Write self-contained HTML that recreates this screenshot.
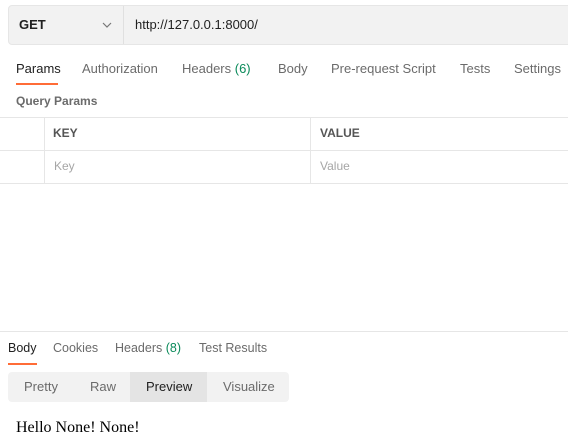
<!DOCTYPE html>
<html><head><style>
*{margin:0;padding:0;box-sizing:border-box}
body{width:568px;height:441px;background:#fff;font-family:"Liberation Sans",sans-serif;position:relative;overflow:hidden;color:#505050}
.a{position:absolute;white-space:nowrap}
.t{font-size:13px;color:#6b6b6b}
</style></head><body>
<div class="a" style="left:8px;top:5px;width:570px;height:40px;background:#f2f2f2;border:1px solid #e6e6e6;border-radius:4px"></div>
<div class="a" style="left:123px;top:6px;width:1px;height:38px;background:#e0e0e0"></div>
<div class="a" style="left:19px;top:17px;font-size:13px;font-weight:bold;color:#212121">GET</div>
<svg class="a" style="left:102px;top:21px" width="10" height="8"><path d="M1 2 L5 6 L9 2" stroke="#777" stroke-width="1.2" fill="none"/></svg>
<div class="a" style="left:135px;top:17px;font-size:13px;color:#212121">http://127.0.0.1:8000/</div>

<div class="a t" style="left:16px;top:61px;color:#212121">Params</div>
<div class="a" style="left:16px;top:83px;width:42px;height:2px;background:#ff6c37"></div>
<div class="a t" style="left:82px;top:61px">Authorization</div>
<div class="a t" style="left:182px;top:61px">Headers <span style="color:#0a8a5a">(6)</span></div>
<div class="a t" style="left:278px;top:61px">Body</div>
<div class="a t" style="left:331px;top:61px">Pre-request Script</div>
<div class="a t" style="left:460px;top:61px">Tests</div>
<div class="a t" style="left:514px;top:61px">Settings</div>

<div class="a" style="left:16px;top:94px;font-size:12px;font-weight:bold;color:#6b6b6b">Query Params</div>
<div class="a" style="left:0;top:117px;width:568px;height:1px;background:#e6e6e6"></div>
<div class="a" style="left:0;top:150px;width:568px;height:1px;background:#e6e6e6"></div>
<div class="a" style="left:0;top:183px;width:568px;height:1px;background:#e6e6e6"></div>
<div class="a" style="left:44px;top:117px;width:1px;height:66px;background:#e6e6e6"></div>
<div class="a" style="left:310px;top:117px;width:1px;height:66px;background:#e6e6e6"></div>
<div class="a" style="left:53px;top:126px;font-size:12px;font-weight:bold;color:#555">KEY</div>
<div class="a" style="left:320px;top:126px;font-size:12px;font-weight:bold;color:#555">VALUE</div>
<div class="a" style="left:54px;top:159px;font-size:12px;color:#a6a6a6">Key</div>
<div class="a" style="left:320px;top:159px;font-size:12px;color:#a6a6a6">Value</div>

<div class="a" style="left:0;top:331px;width:568px;height:1px;background:#e6e6e6"></div>
<div class="a t" style="left:8px;top:341px;color:#212121;font-size:12.5px">Body</div>
<div class="a" style="left:8px;top:363px;width:29px;height:2px;background:#ff6c37"></div>
<div class="a t" style="left:53px;top:341px;font-size:12.5px">Cookies</div>
<div class="a t" style="left:115px;top:341px;font-size:12.5px">Headers <span style="color:#0a8a5a">(8)</span></div>
<div class="a t" style="left:199px;top:341px;font-size:12.5px">Test Results</div>

<div class="a" style="left:8px;top:372px;width:281px;height:30px;background:#f2f2f2;border-radius:4px"></div>
<div class="a" style="left:130px;top:372px;width:77px;height:30px;background:#e4e4e4"></div>
<div class="a t" style="left:24px;top:379px">Pretty</div>
<div class="a t" style="left:90px;top:379px">Raw</div>
<div class="a t" style="left:146px;top:379px;color:#212121">Preview</div>
<div class="a t" style="left:223px;top:379px">Visualize</div>

<div class="a" style="left:16px;top:419px;font-family:'Liberation Serif',serif;font-size:16px;color:#000">Hello None! None!</div>
</body></html>
